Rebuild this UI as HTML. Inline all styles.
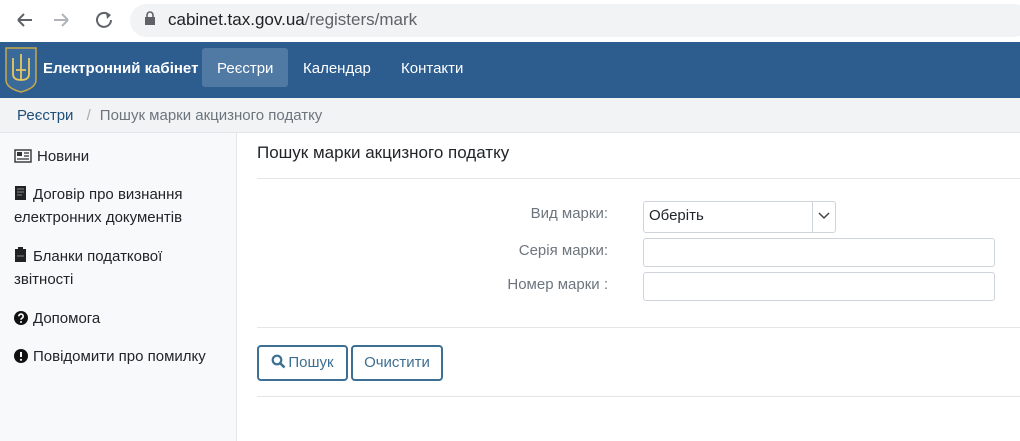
<!DOCTYPE html>
<html><head><meta charset="utf-8"><style>
*{box-sizing:border-box;margin:0;padding:0}
body{width:1020px;height:441px;overflow:hidden;background:#fff;font-family:"Liberation Sans","DejaVu Sans",sans-serif;color:#212529;position:relative;font-size:15px}
.abs{position:absolute}
.top{top:0;left:0;width:1020px;height:42px;background:#fff}
.url{left:130px;top:4px;width:900px;height:33px;background:#f1f3f4;border-radius:17px}
.nav{top:42px;left:0;width:1020px;height:56px;background:#2d5c8f}
.bc{top:98px;left:0;width:1020px;height:35px;background:#f2f3f5;border-bottom:1px solid #e3e5e8}
.side{top:133px;left:0;width:237px;height:308px;background:#f8f9fa;border-right:1px solid #e6e6e6}
.hr{height:1px;background:#e5e5e5;left:257px;width:763px}
.lbl{color:#6c757d;text-align:right;width:200px;left:408px;font-size:15px}
.inp{border:1px solid #ced4da;border-radius:3px;background:#fff}
.btn{border:2px solid #3d6f92;border-radius:4px;color:#3d6f92;height:36px;top:345px;font-size:15px;line-height:32px;text-align:center;background:#fff}
.it{position:absolute;left:14px;line-height:23px}
.it svg{vertical-align:-2px;margin-right:5px}
</style></head><body>
<div class="abs top"></div>
<div class="abs url"></div>
<svg class="abs" style="left:14px;top:9px" width="110" height="22" viewBox="0 0 110 22">
<path d="M4 11h14M4 11l6-6M4 11l6 6" stroke="#5f6368" stroke-width="2" fill="none"/>
<path d="M40 11h14M54 11l-6-6M54 11l-6 6" stroke="#b0b3b8" stroke-width="2" fill="none"/>
<path d="M95 6a7 7 0 1 0 2 5" stroke="#5f6368" stroke-width="2" fill="none"/><path d="M92 3l5 3-4 4z" fill="#5f6368"/>
</svg>
<svg class="abs" style="left:144px;top:11px" width="12" height="16"><rect x="1" y="6" width="10" height="8" fill="#5f6368"/><path d="M3 6V4a3 3 0 0 1 6 0v2" stroke="#5f6368" stroke-width="1.6" fill="none"/></svg>
<div class="abs" style="left:168px;top:10px;font-size:17px;color:#202124">cabinet.tax.gov.ua<span style="color:#5f6368">/registers/mark</span></div>
<div class="abs nav"></div>
<svg class="abs" style="left:4px;top:46px" width="34" height="48" viewBox="0 0 34 48"><path d="M2 2h30v32q0 8-15 12Q2 42 2 34z" fill="#3a6a9a" stroke="#c9a84a" stroke-width="1.5"/><path d="M17 8v26M9 12v16q0 6 8 6q8 0 8-6V12M12 24h10" stroke="#e8c760" stroke-width="1.8" fill="none"/></svg>
<div class="abs" style="left:43px;top:60px;color:#fff;font-weight:bold;font-size:15px">Електронний кабінет</div>
<div class="abs" style="left:202px;top:48px;width:86px;height:39px;background:#5079a3;border-radius:3px"></div>
<div class="abs" style="left:217px;top:60px;color:#fff">Реєстри</div>
<div class="abs" style="left:303px;top:60px;color:#fff">Календар</div>
<div class="abs" style="left:401px;top:60px;color:#fff">Контакти</div>
<div class="abs bc"></div>
<div class="abs" style="left:17px;top:107px;color:#1f4e79;font-size:15px">Реєстри <span style="color:#aaa;margin:0 9px">/</span><span style="color:#6c757d">Пошук марки акцизного податку</span></div>
<div class="abs side"></div>
<div class="it" style="top:145px"><svg width="18" height="14"><rect x="1" y="1" width="16" height="12" fill="none" stroke="#333" stroke-width="1.4"/><rect x="3" y="3" width="5" height="4" fill="#333"/><path d="M10 4h5M10 7h5M3 10h12" stroke="#333" stroke-width="1.2"/></svg>Новини</div>
<div class="it" style="top:183px"><svg width="14" height="16"><rect x="1" y="1" width="11" height="14" fill="#222"/><path d="M3 4h7M3 7h7M3 10h5" stroke="#888" stroke-width="1"/></svg>Договір про визнання<br>електронних документів</div>
<div class="it" style="top:245px"><svg width="14" height="16"><rect x="1" y="2" width="11" height="13" fill="#222"/><rect x="4" y="0" width="5" height="3" fill="#222"/><path d="M3 9h7" stroke="#888" stroke-width="1"/></svg>Бланки податкової<br>звітності</div>
<div class="it" style="top:307px"><svg width="14" height="14"><circle cx="7" cy="7" r="7" fill="#111"/><path d="M4.8 5.3a2.2 2.2 0 1 1 3 2c-.7.3-.8.7-.8 1.4" stroke="#fff" stroke-width="1.6" fill="none"/><circle cx="7" cy="11" r="1" fill="#fff"/></svg>Допомога</div>
<div class="it" style="top:345px"><svg width="14" height="14"><circle cx="7" cy="7" r="7" fill="#111"/><path d="M7 3v5" stroke="#fff" stroke-width="2"/><circle cx="7" cy="10.8" r="1.1" fill="#fff"/></svg>Повідомити про помилку</div>
<div class="abs" style="left:257px;top:143px;font-size:17px">Пошук марки акцизного податку</div>
<div class="abs hr" style="top:178px"></div>
<div class="abs lbl" style="top:205px">Вид марки:</div>
<div class="abs lbl" style="top:242px">Серія марки:</div>
<div class="abs lbl" style="top:276px">Номер марки :</div>
<div class="abs inp" style="left:643px;top:201px;width:193px;height:32px"></div>
<div class="abs" style="left:812px;top:201px;width:1px;height:32px;background:#ced4da"></div>
<svg class="abs" style="left:818px;top:211px" width="12" height="10"><path d="M1 2l5 5 5-5" stroke="#444" stroke-width="1.5" fill="none"/></svg>
<div class="abs" style="left:649px;top:207px">Оберіть</div>
<div class="abs inp" style="left:643px;top:238px;width:352px;height:29px"></div>
<div class="abs inp" style="left:643px;top:272px;width:352px;height:29px"></div>
<div class="abs hr" style="top:327px"></div>
<div class="abs btn" style="left:257px;width:91px"><svg width="15" height="15" style="vertical-align:-2px;margin-right:2px"><circle cx="6" cy="6" r="4.3" stroke="#3d6f92" stroke-width="2.2" fill="none"/><path d="M9 9l4.5 4.5" stroke="#3d6f92" stroke-width="2.6"/></svg>Пошук</div>
<div class="abs btn" style="left:351px;width:92px">Очистити</div>
<div class="abs hr" style="top:396px"></div>
</body></html>
